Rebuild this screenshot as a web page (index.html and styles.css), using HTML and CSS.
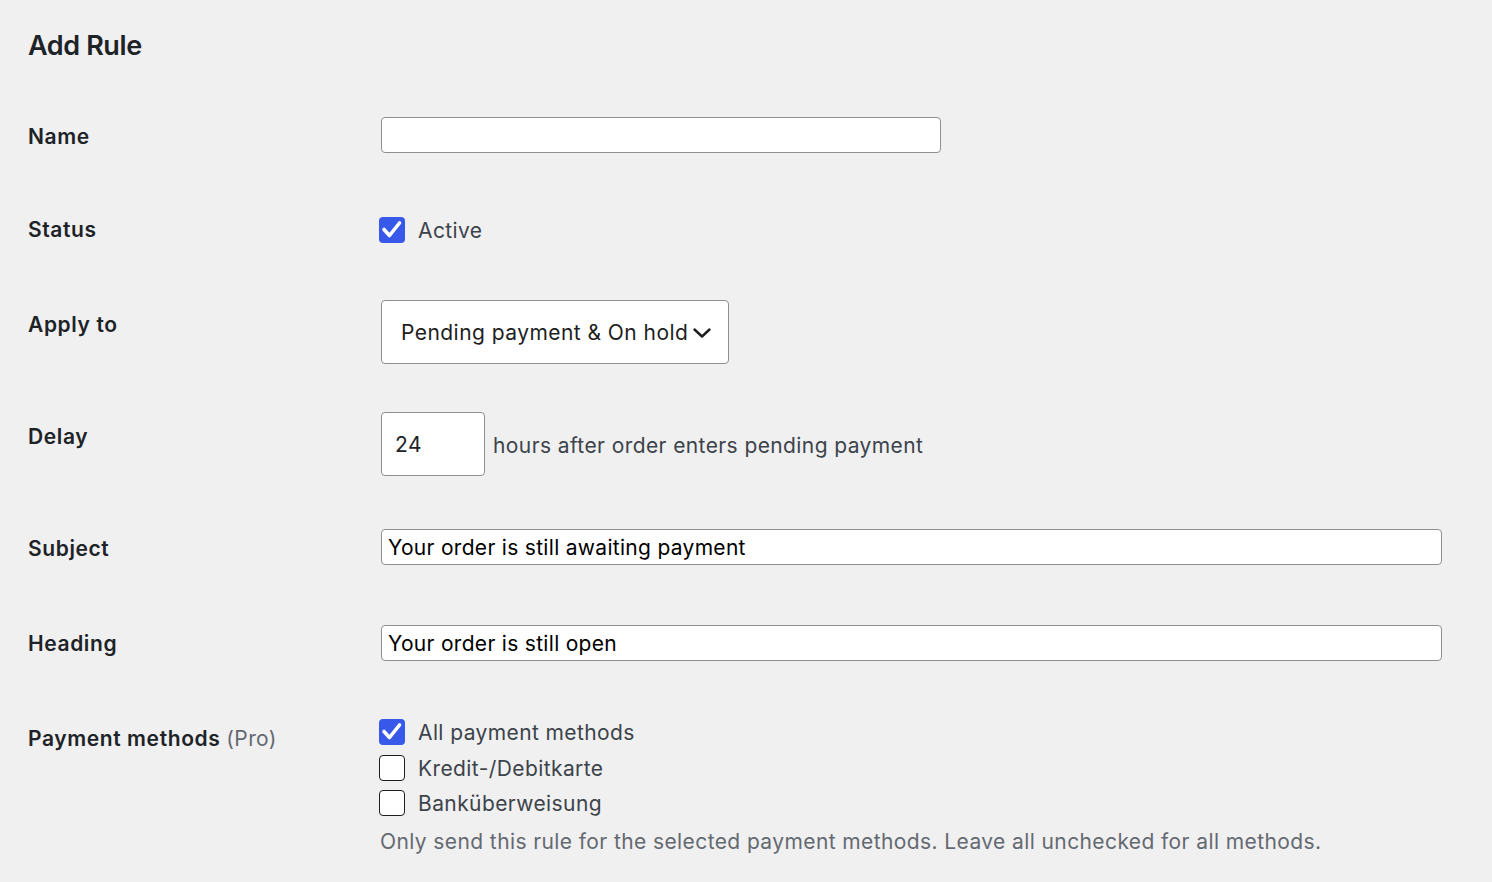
FILE: index.html
```html
<!DOCTYPE html>
<html lang="en">
<head>
<meta charset="utf-8">
<title>Add Rule</title>
<link rel="stylesheet" href="styles.css">
</head>
<body>
<div class="wrap">
  <h2 class="title">Add Rule</h2>
  <div class="form">
    <div class="row row-name">
      <div class="label">Name</div>
      <div class="control"><input class="text name-input" type="text" value=""></div>
    </div>
    <div class="row row-status">
      <div class="label label-check">Status</div>
      <div class="control">
        <label class="check-line">
          <span class="box checked"><svg viewBox="0 0 26 26" width="26" height="26"><path d="M5 12.5 L10.5 18.5 L20.5 6" fill="none" stroke="#fff" stroke-width="3.6" stroke-linecap="round" stroke-linejoin="round"/></svg></span>
          <span class="check-text">Active</span>
        </label>
      </div>
    </div>
    <div class="row row-apply">
      <div class="label label-tall">Apply to</div>
      <div class="control">
        <div class="select">
          <span class="select-text">Pending payment &amp; On hold</span>
          <svg class="chev" viewBox="0 0 18 10" width="18" height="10"><path d="M1.5 1.5 L9 8.5 L16.5 1.5" fill="none" stroke="#1e1e1e" stroke-width="2.4" stroke-linecap="round" stroke-linejoin="round"/></svg>
        </div>
      </div>
    </div>
    <div class="row row-delay">
      <div class="label label-tall">Delay</div>
      <div class="control delay-control">
        <div class="num">24</div>
        <span class="after">hours after order enters pending payment</span>
      </div>
    </div>
    <div class="row row-subject">
      <div class="label">Subject</div>
      <div class="control"><input class="text wide" type="text" value="Your order is still awaiting payment"></div>
    </div>
    <div class="row row-heading">
      <div class="label label-5">Heading</div>
      <div class="control"><input class="text wide" type="text" value="Your order is still open"></div>
    </div>
    <div class="row row-pay">
      <div class="label">Payment methods <span class="pro">(Pro)</span></div>
      <div class="control pay-list">
        <label class="check-line">
          <span class="box checked"><svg viewBox="0 0 26 26" width="26" height="26"><path d="M5 12.5 L10.5 18.5 L20.5 6" fill="none" stroke="#fff" stroke-width="3.6" stroke-linecap="round" stroke-linejoin="round"/></svg></span>
          <span class="check-text">All payment methods</span>
        </label>
        <label class="check-line">
          <span class="box"></span>
          <span class="check-text">Kredit-/Debitkarte</span>
        </label>
        <label class="check-line">
          <span class="box"></span>
          <span class="check-text">Banküberweisung</span>
        </label>
        <p class="help">Only send this rule for the selected payment methods. Leave all unchecked for all methods.</p>
      </div>
    </div>
  </div>
</div>
</body>
</html>
```

FILE: styles.css
```css
html, body {
  margin: 0;
  padding: 0;
  background: #f0f0f1;
}
body {
  font-family: Inter, "Noto Sans", "Liberation Sans", sans-serif;
  color: #1d2327;
  font-size: 21px;
  letter-spacing: 0.4px;
}
.wrap {
  padding: 28px 0 0 28px;
  width: 1414px;
}
.title {
  margin: 0;
  font-size: 27px;
  line-height: 35px;
  font-weight: 600;
  letter-spacing: -0.4px;
  color: #1d2327;
}
.form {
  margin-top: 54px;
}
.row {
  display: grid;
  grid-template-columns: 353px 1fr;
  align-items: start;
}
.row-status { margin-top: 64px; }
.row-apply { margin-top: 57px; }
.row-delay { margin-top: 48px; }
.row-subject { margin-top: 53px; }
.row-heading { margin-top: 60px; }
.row-pay { margin-top: 58px; }

.label {
  font-weight: 600;
  line-height: 26px;
  margin-top: 7px;
  letter-spacing: 0.6px;
  color: #1d2327;
}
.label-check { margin-top: 0; }
.label-tall { margin-top: 12px; }
.label-5 { margin-top: 6px; }
.pro {
  font-weight: 400;
  letter-spacing: 0.4px;
  color: #646970;
}
.control {
  min-width: 0;
}
.text {
  display: block;
  box-sizing: border-box;
  height: 36px;
  margin: 0;
  padding: 0 6px;
  border: 1px solid #8c8f94;
  border-radius: 4px;
  background: #fff;
  font-family: inherit;
  font-size: 21px;
  letter-spacing: 0.3px;
  color: #000;
  outline: none;
}
.name-input { width: 560px; }
.wide { width: 1061px; }

.check-line {
  display: flex;
  align-items: center;
  height: 26px;
  gap: 13px;
  color: #3c434a;
  line-height: 26px;
}
.box {
  box-sizing: border-box;
  width: 26px;
  height: 26px;
  border: 1.5px solid #1e1e1e;
  border-radius: 4px;
  background: #fff;
  margin-left: -2px;
  flex: none;
  display: block;
}
.box svg { display: block; }
.box.checked {
  background: #3858e9;
  border: none;
}
.check-text {
  position: relative;
  top: 1px;
}
.select {
  box-sizing: border-box;
  width: 348px;
  height: 64px;
  border: 1px solid #8c8f94;
  border-radius: 4px;
  background: #fff;
  display: flex;
  align-items: center;
  gap: 5px;
  padding: 0 16px 0 19px;
  color: #1e1e1e;
}
.select-text {
  letter-spacing: 0.45px;
}
.chev {
  display: block;
  margin-top: 2px;
}
.delay-control {
  display: flex;
  align-items: center;
  gap: 8px;
}
.num {
  box-sizing: border-box;
  width: 104px;
  height: 64px;
  border: 1px solid #8c8f94;
  border-radius: 4px;
  background: #fff;
  display: flex;
  align-items: center;
  padding-left: 13px;
  color: #1d2327;
}
.after {
  color: #3c434a;
  position: relative;
  top: 1px;
}
.pay-list {
  display: flex;
  flex-direction: column;
  gap: 9.5px;
}
.help {
  margin: 3px 0 0 -1px;
  color: #646970;
  line-height: 26px;
}
```
